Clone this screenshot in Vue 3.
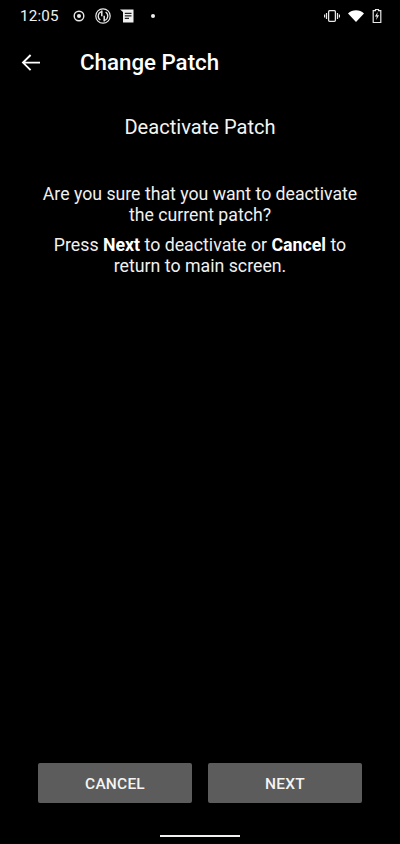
<script setup>
const title = "Change Patch";
</script>

<template>
    <div class="screen">
        <!-- status bar -->
        <div class="status-bar">
            <span class="clock">12:05</span>
            <div class="status-left">
                <svg class="ic-record" width="14" height="14" viewBox="0 0 14 14">
                    <circle cx="7" cy="7" r="4.8" fill="none" stroke="#e8e8e8" stroke-width="1.4" />
                    <circle cx="7" cy="7" r="2" fill="#e8e8e8" />
                </svg>
                <svg class="ic-sync" width="16" height="16" viewBox="0 0 16 16">
                    <circle cx="8" cy="8" r="7.2" fill="none" stroke="#e8e8e8" stroke-width="1.2" />
                    <path d="M6.4 3.6 A4.7 4.7 0 0 0 5.4 12 M9.6 12.4 A4.7 4.7 0 0 0 10.6 4" fill="none" stroke="#e8e8e8" stroke-width="1.3" />
                    <path d="M6.8 2.6v5.6M9.2 7.8v5.6" fill="none" stroke="#e8e8e8" stroke-width="1.5" />
                </svg>
                <svg class="ic-note" width="15" height="14" viewBox="0 0 15 14">
                    <path d="M0 0.5H13.5V13.5H3V3Z" fill="#f0f0f0" />
                    <path d="M4.8 4.3H11.5M4.8 6.8H11.5M4.8 9.3H9" stroke="#222" stroke-width="1.2" />
                </svg>
                <span class="dot"></span>
            </div>
            <div class="status-right">
                <svg width="16" height="12" viewBox="0 0 16 12">
                    <rect x="4.6" y="0.7" width="6.8" height="10.6" rx="1" fill="none" stroke="#e8e8e8" stroke-width="1.3" />
                    <path d="M2.5 3v6M13.5 3v6" stroke="#e8e8e8" stroke-width="1.2" />
                    <path d="M0.6 4.5v3M15.4 4.5v3" stroke="#e8e8e8" stroke-width="1.2" />
                </svg>
                <svg width="16" height="12" viewBox="0 0 16 12">
                    <path d="M0 3.4C4.4 -0.9 11.6 -0.9 16 3.4L8 12Z" fill="#fff" />
                </svg>
                <svg class="ic-batt" width="10" height="14" viewBox="0 0 9 14">
                    <path d="M3 0.5h3v1.2h2.3v11.8H0.7V1.7H3Z" fill="none" stroke="#e8e8e8" stroke-width="1.2" />
                    <path d="M5.2 3L2.4 7.6h1.9L3.6 11l3-4.7H4.7Z" fill="#e8e8e8" />
                </svg>
            </div>
        </div>

        <!-- toolbar -->
        <header class="toolbar">
            <svg class="back" width="20" height="20" viewBox="0 0 20 20">
                <path d="M19 10.6H2.4M9.6 3L2 10.6l7.6 7.6" fill="none" stroke="#fff" stroke-width="1.9" />
            </svg>
            <h1 class="title">{{ title }}</h1>
        </header>

        <main class="content">
            <h2 class="heading">Deactivate Patch</h2>
            <p class="question">Are you sure that you want to deactivate<br />the current patch?</p>
            <p class="hint">
                Press <b>Next</b> to deactivate or <b>Cancel</b> to<br />return to main screen.
            </p>
        </main>

        <div class="actions">
            <button class="btn">CANCEL</button>
            <button class="btn">NEXT</button>
        </div>

        <div class="nav-pill-wrap">
            <div class="nav-pill"></div>
        </div>
    </div>
</template>

<style scoped>
.screen {
    width: 400px;
    height: 844px;
    background: #000;
    color: #fff;
    font-family: Roboto, "Liberation Sans", sans-serif;
    display: flex;
    flex-direction: column;
    overflow: hidden;
}

.status-bar {
    height: 31px;
    display: flex;
    align-items: center;
    padding: 0 18px 0 20px;
    box-sizing: border-box;
    color: #f0f0f0;
}

.clock {
    font-size: 15.2px;
    letter-spacing: 0.2px;
    width: 52px;
}

.status-left {
    display: flex;
    align-items: center;
    gap: 9px;
    flex: 1;
}

.dot {
    width: 4px;
    height: 4px;
    border-radius: 50%;
    background: #eee;
    margin-left: 7px;
}

.status-right {
    display: flex;
    align-items: center;
    gap: 8px;
}

.toolbar {
    height: 62px;
    display: flex;
    align-items: center;
    padding-left: 21px;
}

.back {
    flex-shrink: 0;
}

.title {
    margin: 0 0 0 39px;
    font-size: 22.3px;
    font-weight: 500;
}

.content {
    flex: 1;
    text-align: center;
    padding-top: 20px;
}

.heading {
    margin: 0;
    font-size: 20.1px;
    font-weight: 400;
    line-height: 28px;
    color: #f4f4f4;
}

.question {
    margin: 43px 0 0;
    font-size: 17.7px;
    line-height: 21px;
    color: #f0f0f0;
}

.hint {
    margin: 9px 0 0;
    font-size: 17.75px;
    line-height: 21px;
    color: #f0f0f0;
}

.hint b {
    color: #fff;
    font-weight: 700;
}

.actions {
    display: flex;
    gap: 16px;
    padding: 0 38px;
}

.btn {
    flex: 1;
    height: 40px;
    border: none;
    border-radius: 2px;
    background: #5c5c5c;
    color: #f4f4f4;
    font-family: inherit;
    font-size: 15.5px;
    font-weight: 500;
    letter-spacing: 0.2px;
    padding: 2px 0 0;
}

.nav-pill-wrap {
    height: 41px;
    display: flex;
    justify-content: center;
    align-items: flex-end;
    padding-bottom: 7px;
    box-sizing: border-box;
}

.nav-pill {
    width: 80px;
    height: 2px;
    background: #f0f0f0;
}
</style>
